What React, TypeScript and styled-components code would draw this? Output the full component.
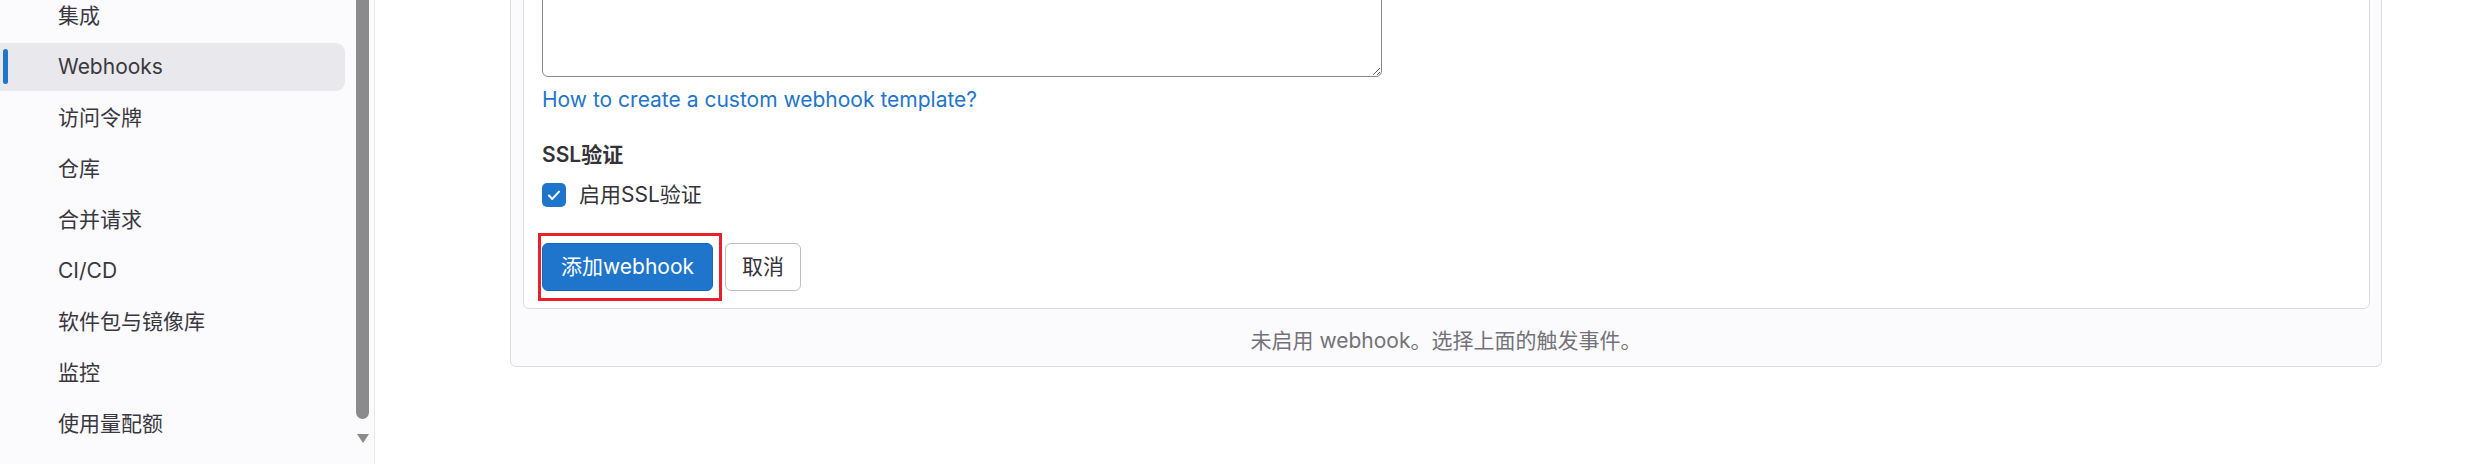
import React from "react";
import styled, { createGlobalStyle } from "styled-components";

const GlobalStyle = createGlobalStyle`
  html, body {
    margin: 0;
    padding: 0;
    background: #ffffff;
    overflow: hidden;
  }
  body {
    font-family: "Inter", "Noto Sans CJK SC", sans-serif;
    font-size: 21px;
    line-height: 30px;
    color: #333238;
  }
`;

const Page = styled.div`
  display: flex;
  height: 464px;
  overflow: hidden;
`;

const Sidebar = styled.aside`
  display: flex;
  width: 374px;
  flex-shrink: 0;
  height: 464px;
  background: #fbfafd;
  border-right: 1px solid #e9e9ed;
  overflow: hidden;
`;

const NavList = styled.nav`
  display: flex;
  flex-direction: column;
  gap: 3px;
  width: 345px;
  margin-top: -8px;
`;

const NavItem = styled.div<{ $active?: boolean }>`
  position: relative;
  display: flex;
  align-items: center;
  height: 48px;
  padding-left: 58px;
  border-radius: 0 9px 9px 0;
  color: #3a383f;
  background: ${(p) => (p.$active ? "#e9e8ed" : "transparent")};

  &::before {
    content: "";
    display: ${(p) => (p.$active ? "block" : "none")};
    position: absolute;
    left: 3px;
    top: 6px;
    bottom: 7px;
    width: 5px;
    border-radius: 3px;
    background: #1f75cb;
  }
`;

const ScrollTrack = styled.div`
  display: flex;
  flex-direction: column;
  align-items: flex-start;
  width: 29px;
  padding-left: 11px;
  box-sizing: border-box;
`;

const ScrollThumb = styled.div`
  width: 13px;
  height: 419px;
  background: #8b8b8b;
  border-radius: 0 0 7px 7px;
`;

const ScrollArrow = styled.div`
  margin-top: 15px;
  margin-left: 1px;
  width: 0;
  height: 0;
  border-left: 6px solid transparent;
  border-right: 6px solid transparent;
  border-top: 9px solid #8b8b8b;
`;

const Main = styled.main`
  flex: 1;
  padding: 0 109px 0 135px;
`;

const OuterCard = styled.section`
  margin-top: -80px;
  background: #fbfafd;
  border: 1px solid #dcdcde;
  border-radius: 6px;
`;

const InnerCard = styled.div`
  margin: 12px 11px 0 12px;
  background: #ffffff;
  border: 1px solid #dcdcde;
  border-radius: 6px;
  padding: 18px 18px 17px;
`;

const TextArea = styled.textarea`
  display: block;
  box-sizing: border-box;
  width: 840px;
  height: 125px;
  margin: 0;
  border: 1px solid #89888d;
  border-radius: 6px;
  background: #ffffff;
  font: inherit;
`;

const HelpLink = styled.a`
  display: block;
  margin-top: 8px;
  color: #1f75cb;
  text-decoration: none;
`;

const FieldLabel = styled.div`
  margin-top: 25px;
  font-weight: 600;
  color: #333238;
`;

const CheckRow = styled.label`
  display: flex;
  align-items: center;
  gap: 13px;
  margin-top: 10px;
  color: #333238;
`;

const CheckBox = styled.span`
  display: flex;
  align-items: center;
  justify-content: center;
  width: 24px;
  height: 24px;
  border-radius: 5px;
  background: #1f75cb;
`;

const Actions = styled.div`
  display: flex;
  gap: 12px;
  margin-top: 33px;
`;

const Highlight = styled.div`
  position: relative;
  display: flex;

  &::after {
    content: "";
    position: absolute;
    top: -10px;
    bottom: -10px;
    left: -4px;
    right: -9px;
    border: 3px solid #e8202a;
    pointer-events: none;
  }
`;

const Button = styled.button<{ $primary?: boolean }>`
  height: 48px;
  padding: 0 ${(p) => (p.$primary ? "18px" : "16px")};
  font: inherit;
  border-radius: 6px;
  border: 1px solid ${(p) => (p.$primary ? "#1068bf" : "#bfbfc3")};
  background: ${(p) => (p.$primary ? "#1f75cb" : "#ffffff")};
  color: ${(p) => (p.$primary ? "#ffffff" : "#333238")};
`;

const Footer = styled.div`
  padding: 17px 0 10px;
  text-align: center;
  color: #737278;
`;

const navItems = [
  "集成",
  "Webhooks",
  "访问令牌",
  "仓库",
  "合并请求",
  "CI/CD",
  "软件包与镜像库",
  "监控",
  "使用量配额",
];

export default function App() {
  return (
    <>
      <GlobalStyle />
      <Page>
        <Sidebar>
          <NavList>
            {navItems.map((item) => (
              <NavItem key={item} $active={item === "Webhooks"}>
                {item}
              </NavItem>
            ))}
          </NavList>
          <ScrollTrack>
            <ScrollThumb />
            <ScrollArrow />
          </ScrollTrack>
        </Sidebar>
        <Main>
          <OuterCard>
            <InnerCard>
              <TextArea />
              <HelpLink href="#">How to create a custom webhook template?</HelpLink>
              <FieldLabel>SSL验证</FieldLabel>
              <CheckRow>
                <CheckBox>
                  <svg width="18" height="18" viewBox="0 0 16 16" fill="none">
                    <path
                      d="M3.5 8.5l3 3 6-6.5"
                      stroke="#ffffff"
                      strokeWidth="1.8"
                      strokeLinecap="round"
                      strokeLinejoin="round"
                    />
                  </svg>
                </CheckBox>
                启用SSL验证
              </CheckRow>
              <Actions>
                <Highlight>
                  <Button $primary>添加webhook</Button>
                </Highlight>
                <Button>取消</Button>
              </Actions>
            </InnerCard>
            <Footer>未启用 webhook。选择上面的触发事件。</Footer>
          </OuterCard>
        </Main>
      </Page>
    </>
  );
}
